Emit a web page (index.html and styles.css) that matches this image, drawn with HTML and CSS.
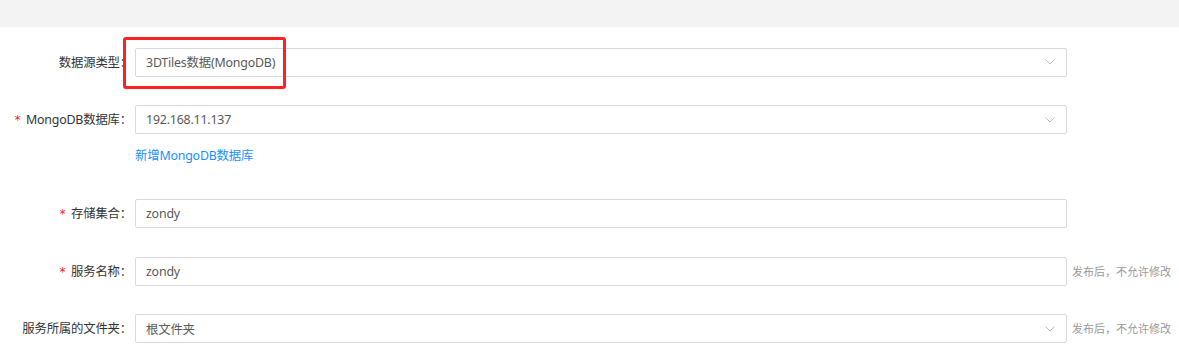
FILE: index.html
```html
<!DOCTYPE html>
<html lang="zh-CN">
<head>
<meta charset="utf-8">
<title>数据源</title>
<link rel="stylesheet" href="styles.css">
</head>
<body>
<div class="topbar"></div>
<form class="form">
  <div class="row">
    <label class="label">数据源类型：</label>
    <div class="control">
      <div class="select">
        <span class="value">3DTiles数据(MongoDB)</span>
        <svg class="arrow" width="10" height="6" viewBox="0 0 10 6"><path d="M0.5 0.5 L5 5 L9.5 0.5" fill="none" stroke="#bfbfbf" stroke-width="1"/></svg>
      </div>
      <div class="highlight"></div>
    </div>
  </div>
  <div class="row">
    <label class="label"><span class="req">*</span>MongoDB数据库：</label>
    <div class="control">
      <div class="select">
        <span class="value">192.168.11.137</span>
        <svg class="arrow" width="10" height="6" viewBox="0 0 10 6"><path d="M0.5 0.5 L5 5 L9.5 0.5" fill="none" stroke="#bfbfbf" stroke-width="1"/></svg>
      </div>
      <a class="link" href="#">新增MongoDB数据库</a>
    </div>
  </div>
  <div class="row">
    <label class="label"><span class="req">*</span>存储集合：</label>
    <div class="control">
      <div class="input"><span class="value">zondy</span></div>
    </div>
  </div>
  <div class="row">
    <label class="label"><span class="req">*</span>服务名称：</label>
    <div class="control">
      <div class="input"><span class="value">zondy</span></div>
    </div>
    <span class="help">发布后，不允许修改</span>
  </div>
  <div class="row">
    <label class="label">服务所属的文件夹：</label>
    <div class="control">
      <div class="select">
        <span class="value">根文件夹</span>
        <svg class="arrow" width="10" height="6" viewBox="0 0 10 6"><path d="M0.5 0.5 L5 5 L9.5 0.5" fill="none" stroke="#bfbfbf" stroke-width="1"/></svg>
      </div>
    </div>
    <span class="help">发布后，不允许修改</span>
  </div>
</form>
</body>
</html>
```
FILE: styles.css
```css
* { box-sizing: border-box; }
html, body { margin: 0; padding: 0; background: #fff; }
body {
  font-family: "Noto Sans", "Noto Sans CJK SC", sans-serif;
  font-size: 12.4px;
  color: #333;
  width: 1179px;
  height: 356px;
  overflow: hidden;
}
.topbar {
  height: 27px;
  background: #f3f3f3;
}
.form {
  display: flex;
  flex-direction: column;
  gap: 28.5px;
  padding-top: 20.5px;
}
.row {
  display: flex;
  align-items: flex-start;
}
.label {
  width: 135px;
  flex: none;
  height: 29px;
  line-height: 29px;
  text-align: right;
  padding-right: 3px;
  color: #333;
  white-space: nowrap;
  letter-spacing: -0.2px;
}
.req {
  color: #f5222d;
  margin-right: 5px;
  font-family: "DejaVu Sans Mono", monospace;
  font-size: 12px;
}
.control {
  position: relative;
  width: 932px;
  flex: none;
  display: flex;
  flex-direction: column;
}
.select, .input {
  height: 29px;
  border: 1px solid #d9d9d9;
  border-radius: 2px;
  display: flex;
  align-items: center;
  padding: 0 11px 0 10px;
  background: #fff;
}
.value {
  color: #595959;
  flex: 1;
  letter-spacing: -0.2px;
}
.arrow {
  flex: none;
}
.highlight {
  position: absolute;
  left: -12px;
  top: -10.5px;
  width: 163px;
  height: 52px;
  border: 3px solid #ff2121;
  border-radius: 3px;
}
.link {
  color: #1890ff;
  text-decoration: none;
  margin-top: 13px;
  line-height: 18px;
  padding-bottom: 5.5px;
  align-self: flex-start;
  letter-spacing: -0.2px;
}
.help {
  margin-left: 5px;
  line-height: 29px;
  font-size: 11px;
  color: #999;
  white-space: nowrap;
}
```
